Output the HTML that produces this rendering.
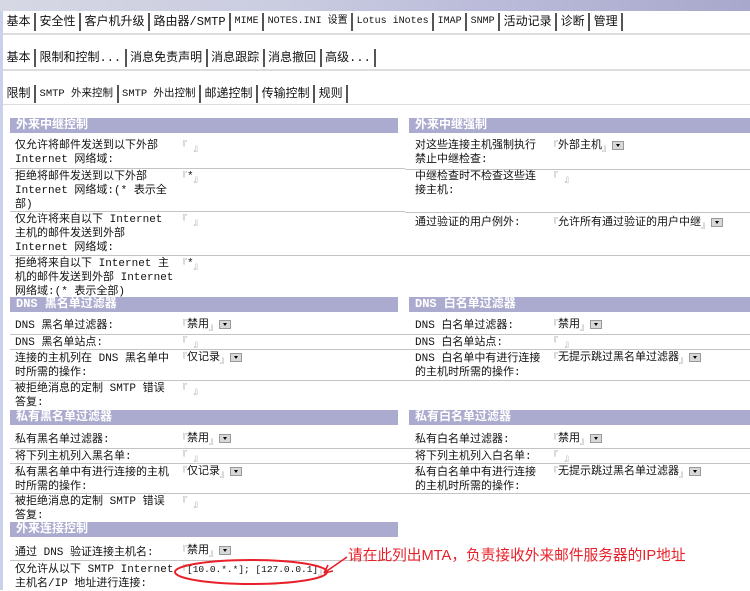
<!DOCTYPE html>
<html><head><meta charset="utf-8"><style>
*{margin:0;padding:0;box-sizing:border-box}
body{width:750px;height:590px;overflow:hidden;background:#fff;position:relative;font-family:"Liberation Mono","Noto Sans CJK SC",monospace;font-size:11px;color:#111;line-height:14px}
.a{position:absolute;white-space:nowrap}
.ban{left:0;top:0;width:750px;height:11px;background:linear-gradient(90deg,#d6d8e4,#c9cbe0 40%,#b8b8d8 70%,#a8a8cc)}
.strip{left:0;top:11px;width:3px;height:579px;background:#c8d2ea}
.tabs{display:flex;align-items:center;height:20px;font-size:12px}
.tabs span{padding:0 3.5px;border-right:2px solid #555;line-height:18px}
.tabs span.sel{background:#fff}
.tl{height:2px;background:#ddd}
.h{height:15px;background:#ababcf;color:#fff;font-weight:bold;font-size:12px;padding-left:6px;line-height:15px}
.ln{height:1px;background:#c4c4c4}
.lab{white-space:normal;line-height:14px}
.v{font-size:11px}
.m{color:#888;font-size:9px;vertical-align:top}
.m2{color:#888;font-size:9px;vertical-align:bottom;position:relative;top:3px}
.dd{display:inline-block;width:12px;height:9px;background:#d8d8d8;border:1px solid #999;vertical-align:middle;position:relative;margin-left:1px}
.dd:after{content:"";position:absolute;left:3px;top:2px;border-left:2.5px solid transparent;border-right:2.5px solid transparent;border-top:3px solid #000}
</style></head><body>
<div class="a ban"></div><div class="a strip"></div>
<div class="a tabs" style="left:3px;top:12px"><span>基本</span><span>安全性</span><span>客户机升级</span><span class="sel">路由器/SMTP</span><span style="font-size:10px">MIME</span><span style="font-size:10px">NOTES.INI 设置</span><span style="font-size:10px">Lotus iNotes</span><span style="font-size:10px">IMAP</span><span style="font-size:10px">SNMP</span><span>活动记录</span><span>诊断</span><span>管理</span></div>
<div class="a tl" style="left:3px;top:33px;width:747px"></div>
<div class="a tabs" style="left:3px;top:48px"><span>基本</span><span>限制和控制...</span><span>消息免责声明</span><span>消息跟踪</span><span>消息撤回</span><span>高级...</span></div>
<div class="a tl" style="left:3px;top:69px;width:747px"></div>
<div class="a tabs" style="left:3px;top:84px"><span>限制</span><span style="font-size:10.5px">SMTP 外来控制</span><span style="font-size:10.5px">SMTP 外出控制</span><span>邮递控制</span><span>传输控制</span><span>规则</span></div>
<div class="a tl" style="left:3px;top:104px;width:747px;height:1px"></div>

<div class="a h" style="left:10px;top:118px;width:388px">外来中继控制</div>
<div class="a h" style="left:409px;top:118px;width:341px">外来中继强制</div>

<div class="a lab" style="left:15px;top:139px;width:160px">仅允许将邮件发送到以下外部 Internet 网络域:</div>
<div class="a v" style="left:178px;top:139px"><span class="m">『</span> <span class="m2">』</span></div>
<div class="a ln" style="left:10px;top:168px;width:395px"></div>
<div class="a lab" style="left:15px;top:170px;width:160px">拒绝将邮件发送到以下外部 Internet 网络域:(* 表示全部)</div>
<div class="a v" style="left:178px;top:170px"><span class="m">『</span>*<span class="m2">』</span></div>
<div class="a ln" style="left:10px;top:211px;width:395px"></div>
<div class="a lab" style="left:15px;top:213px;width:160px">仅允许将来自以下 Internet 主机的邮件发送到外部 Internet 网络域:</div>
<div class="a v" style="left:178px;top:213px"><span class="m">『</span> <span class="m2">』</span></div>
<div class="a ln" style="left:10px;top:255px;width:395px"></div>
<div class="a lab" style="left:15px;top:257px;width:162px">拒绝将来自以下 Internet 主机的邮件发送到外部 Internet 网络域:(* 表示全部)</div>
<div class="a v" style="left:178px;top:257px"><span class="m">『</span>*<span class="m2">』</span></div>

<div class="a lab" style="left:415px;top:139px;width:130px">对这些连接主机强制执行禁止中继检查:</div>
<div class="a v" style="left:549px;top:139px"><span class="m">『</span>外部主机<span class="m2">』</span><span class="dd"></span></div>
<div class="a ln" style="left:405px;top:169px;width:345px"></div>
<div class="a lab" style="left:415px;top:170px;width:130px">中继检查时不检查这些连接主机:</div>
<div class="a v" style="left:549px;top:170px"><span class="m">『</span> <span class="m2">』</span></div>
<div class="a ln" style="left:405px;top:212px;width:345px"></div>
<div class="a lab" style="left:415px;top:216px;width:130px">通过验证的用户例外:</div>
<div class="a v" style="left:549px;top:216px"><span class="m">『</span>允许所有通过验证的用户中继<span class="m2">』</span><span class="dd"></span></div>
<div class="a ln" style="left:405px;top:255px;width:345px"></div>

<div class="a h" style="left:10px;top:297px;width:388px">DNS 黑名单过滤器</div>
<div class="a h" style="left:409px;top:297px;width:341px">DNS 白名单过滤器</div>
<div class="a lab" style="left:15px;top:319px">DNS 黑名单过滤器:</div>
<div class="a v" style="left:178px;top:318px"><span class="m">『</span>禁用<span class="m2">』</span><span class="dd"></span></div>
<div class="a ln" style="left:10px;top:334px;width:395px"></div>
<div class="a lab" style="left:15px;top:336px">DNS 黑名单站点:</div>
<div class="a v" style="left:178px;top:335px"><span class="m">『</span> <span class="m2">』</span></div>
<div class="a ln" style="left:10px;top:349px;width:395px"></div>
<div class="a lab" style="left:15px;top:352px;width:160px">连接的主机列在 DNS 黑名单中时所需的操作:</div>
<div class="a v" style="left:178px;top:351px"><span class="m">『</span>仅记录<span class="m2">』</span><span class="dd"></span></div>
<div class="a ln" style="left:10px;top:380px;width:395px"></div>
<div class="a lab" style="left:15px;top:382px;width:160px">被拒绝消息的定制 SMTP 错误答复:</div>
<div class="a v" style="left:178px;top:382px"><span class="m">『</span> <span class="m2">』</span></div>

<div class="a lab" style="left:415px;top:319px">DNS 白名单过滤器:</div>
<div class="a v" style="left:549px;top:318px"><span class="m">『</span>禁用<span class="m2">』</span><span class="dd"></span></div>
<div class="a ln" style="left:405px;top:334px;width:345px"></div>
<div class="a lab" style="left:415px;top:336px">DNS 白名单站点:</div>
<div class="a v" style="left:549px;top:335px"><span class="m">『</span> <span class="m2">』</span></div>
<div class="a ln" style="left:405px;top:349px;width:345px"></div>
<div class="a lab" style="left:415px;top:352px;width:130px">DNS 白名单中有进行连接的主机时所需的操作:</div>
<div class="a v" style="left:549px;top:351px"><span class="m">『</span>无提示跳过黑名单过滤器<span class="m2">』</span><span class="dd"></span></div>
<div class="a ln" style="left:405px;top:380px;width:345px"></div>

<div class="a h" style="left:10px;top:410px;width:388px">私有黑名单过滤器</div>
<div class="a h" style="left:409px;top:410px;width:341px">私有白名单过滤器</div>
<div class="a lab" style="left:15px;top:433px">私有黑名单过滤器:</div>
<div class="a v" style="left:178px;top:432px"><span class="m">『</span>禁用<span class="m2">』</span><span class="dd"></span></div>
<div class="a ln" style="left:10px;top:448px;width:395px"></div>
<div class="a lab" style="left:15px;top:450px">将下列主机列入黑名单:</div>
<div class="a v" style="left:178px;top:449px"><span class="m">『</span> <span class="m2">』</span></div>
<div class="a ln" style="left:10px;top:463px;width:395px"></div>
<div class="a lab" style="left:15px;top:466px;width:160px">私有黑名单中有进行连接的主机时所需的操作:</div>
<div class="a v" style="left:178px;top:465px"><span class="m">『</span>仅记录<span class="m2">』</span><span class="dd"></span></div>
<div class="a ln" style="left:10px;top:493px;width:395px"></div>
<div class="a lab" style="left:15px;top:495px;width:160px">被拒绝消息的定制 SMTP 错误答复:</div>
<div class="a v" style="left:178px;top:495px"><span class="m">『</span> <span class="m2">』</span></div>

<div class="a lab" style="left:415px;top:433px">私有白名单过滤器:</div>
<div class="a v" style="left:549px;top:432px"><span class="m">『</span>禁用<span class="m2">』</span><span class="dd"></span></div>
<div class="a ln" style="left:405px;top:448px;width:345px"></div>
<div class="a lab" style="left:415px;top:450px">将下列主机列入白名单:</div>
<div class="a v" style="left:549px;top:449px"><span class="m">『</span> <span class="m2">』</span></div>
<div class="a ln" style="left:405px;top:463px;width:345px"></div>
<div class="a lab" style="left:415px;top:466px;width:130px">私有白名单中有进行连接的主机时所需的操作:</div>
<div class="a v" style="left:549px;top:465px"><span class="m">『</span>无提示跳过黑名单过滤器<span class="m2">』</span><span class="dd"></span></div>
<div class="a ln" style="left:405px;top:493px;width:345px"></div>

<div class="a h" style="left:10px;top:522px;width:388px">外来连接控制</div>
<div class="a lab" style="left:15px;top:546px">通过 DNS 验证连接主机名:</div>
<div class="a v" style="left:178px;top:544px"><span class="m">『</span>禁用<span class="m2">』</span><span class="dd"></span></div>
<div class="a ln" style="left:10px;top:560px;width:395px"></div>
<div class="a lab" style="left:15px;top:563px;width:160px">仅允许从以下 SMTP Internet 主机名/IP 地址进行连接:</div>
<div class="a v" style="left:178px;top:563px;font-size:9.5px"><span class="m">『</span>[10.0.*.*]; [127.0.0.1]<span class="m2">』</span></div>

<div class="a" style="left:348px;top:547px;color:#e8202a;font-family:'Liberation Sans','Noto Sans CJK SC',sans-serif;font-size:14.7px;line-height:18px">请在此列出MTA，负责接收外来邮件服务器的IP地址</div>
<svg class="a" style="left:0;top:0" width="750" height="590">
<ellipse cx="251" cy="572" rx="76" ry="12" fill="none" stroke="#e8202a" stroke-width="2"/>
<path d="M347 557 L324 573 M324 573 L333 571 M324 573 L328 565" fill="none" stroke="#e8202a" stroke-width="1.6"/>
</svg>
</body></html>
